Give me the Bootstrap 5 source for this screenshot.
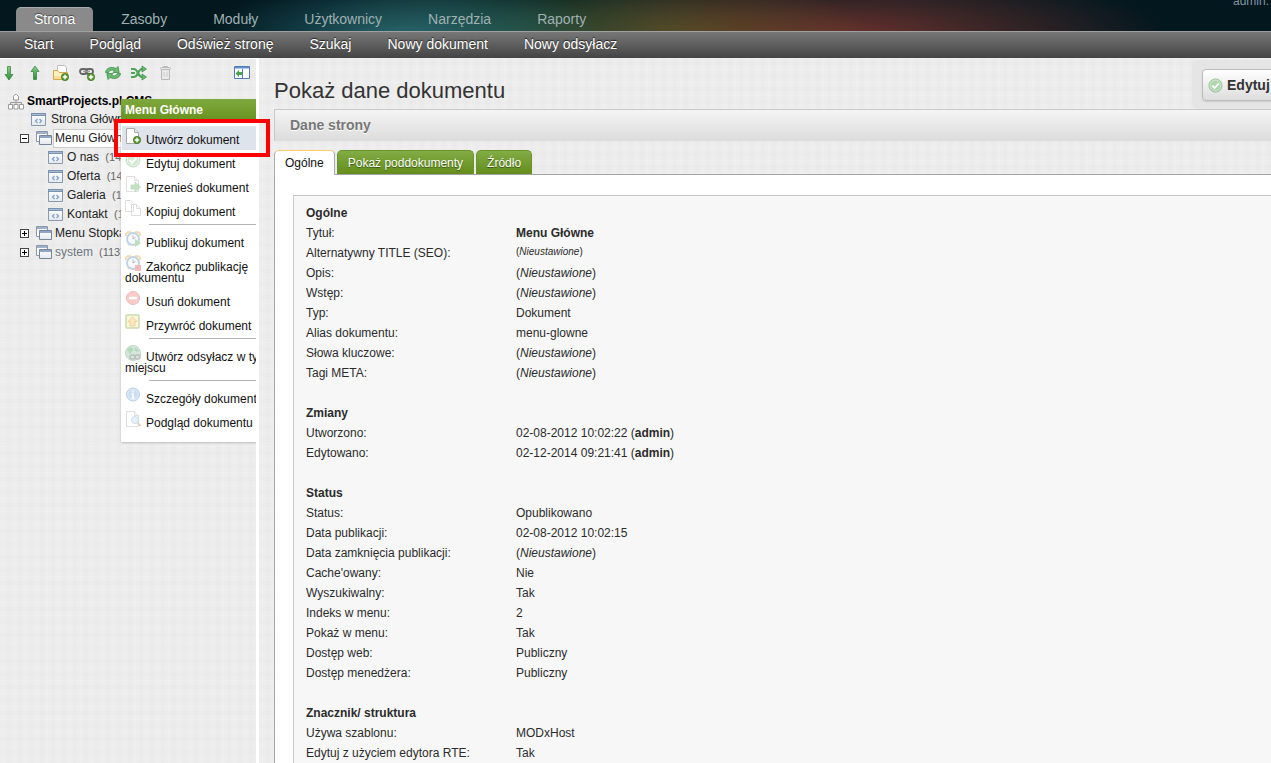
<!DOCTYPE html>
<html lang="pl">
<head>
<meta charset="utf-8">
<meta name="viewport" content="width=device-width, initial-scale=1">
<title>Pokaż dane dokumentu</title>
<link href="https://cdn.jsdelivr.net/npm/bootstrap@5.3.0/dist/css/bootstrap.min.css" rel="stylesheet">
<script src="https://cdn.jsdelivr.net/npm/bootstrap@5.3.0/dist/js/bootstrap.bundle.min.js"></script>
<style>
body{font:12px/20px "Liberation Sans",Arial,sans-serif;color:#2b2b2b}
a{color:inherit;text-decoration:none}
svg{flex:none}
.linen{background-color:#ededed;background-image:
 repeating-linear-gradient(90deg,transparent 0 3px,rgba(255,255,255,.14) 3px 4px,transparent 4px 7px,rgba(0,0,0,.006) 7px 11px),
 repeating-linear-gradient(0deg,transparent 0 4px,rgba(255,255,255,.12) 4px 5px,transparent 5px 9px,rgba(0,0,0,.006) 9px 13px)}
.topbar{height:31px;font-size:14px;background:
 radial-gradient(ellipse 200px 60px at 405px 36px,rgba(45,115,125,.8),transparent),
 radial-gradient(ellipse 220px 70px at 520px 36px,rgba(45,90,55,.6),transparent),
 radial-gradient(ellipse 200px 60px at 670px 36px,rgba(120,95,35,.65),transparent),
 radial-gradient(ellipse 320px 70px at 850px 36px,rgba(140,58,50,.75),transparent),
 #02171e}
.topbar .tab-link{padding:0 18px;height:24px;line-height:25px;color:#9fb1b1;border-radius:5px 5px 0 0}
.topbar .tab-link.active{background:#8a8a8a;color:#fff;border-top:1px solid #aaa;line-height:23px;text-shadow:0 -1px 1px #444}
.user-info{top:-6px;right:2px;font-size:12px;line-height:15px;color:#8197a1}
.subnav{height:27px;padding-left:6px;font-size:14px;line-height:25px;color:#fff;border-top:1px solid #a0a0a0;background:linear-gradient(#777,#444);text-shadow:0 -1px 1px #222}
.subnav a{padding:0 18px}
.side{width:259px;border-right:3px solid #fff;border-top:1px solid #fff;flex:none}
.tools{padding:6px 6px 0 1px;gap:10px}
.icon-btn{border:0;background:none;padding:0;display:flex}
.tree{margin-top:10px;line-height:19px;color:#222}
.tree li{height:19px;white-space:nowrap;display:flex;align-items:center}
.tree .root-row{padding:2px 0 0 8px;gap:3px;font-weight:700;color:#000}
.tree .page-row{padding-left:31px;gap:5px}
.tree .folder-row{padding-left:20px;gap:7px}
.tree .folder-row a{display:flex;align-items:center;gap:1px}
.tree .child-row{padding-left:48px;gap:4px}
.tree .node-text{padding:0 2px}
.tree .chosen{background:#fff;border:1px solid #ccc;padding:0 50px 0 1px;line-height:17px}
.tree .num{font-size:11px;color:#666;margin-left:3px}
.toggle{width:9px;height:9px;border:1px solid #444;background:#fff;padding:0;display:flex}
.ctx{left:121px;top:40px;width:150px;background:#fff;color:#111;box-shadow:0 1px 2px #bbb}
.ctx h2{margin:0;padding:0 4px;height:21px;font-size:12px;line-height:22px;font-weight:700;color:#fff;background:linear-gradient(#7fa93f,#69931f)}
.ctx ul{padding:6px 0 9px 1px}
.ctx li a{display:block;padding:2px 0 4px 3px;line-height:11px}
.ctx li svg{vertical-align:0;margin-right:5px;opacity:.38}
.ctx li.hot a{background:#dde4ec}
.ctx li.hot svg{opacity:1}
.ctx hr{margin:2px 0 4px 27px;border:0;height:1px;background:#999;opacity:.75}
.marker{left:114px;top:119px;width:156px;height:38px;border:4px solid #f00;pointer-events:none}
.page-area{padding:2px 0 0 15px}
.page-area h1{margin:0;font-size:22px;line-height:26px;padding-top:18px;color:#333}
.actions{height:49px;width:79px;padding:9px 0 0 10px;background:#e5e5e5;border-radius:6px 0 0 6px}
.edit-btn{width:100px;height:32px;gap:4px;padding:0 5px;font-size:14px;font-weight:700;color:#333;border:1px solid #bbb;border-radius:4px;background:linear-gradient(#fff,#ddd);box-shadow:0 1px 2px #ccc}
.section-head{height:32px;margin:0 0 9px;padding-left:15px;border:1px solid #c8c8c8;border-width:1px 0 0 1px;font-size:14px;line-height:31px;font-weight:700;color:#777;background:linear-gradient(#f4f4f4,#dcdcdc);text-shadow:0 1px 0 #fff}
.tabs{gap:2px;margin-bottom:-1px;position:relative}
.tabs button{height:24px;padding:0 10px;line-height:25px;color:#fff;border:1px solid #69942a;border-bottom:0;border-radius:5px 5px 0 0;background:linear-gradient(#82ac45,#648d1c);text-shadow:0 1px 1px #34510b}
.tabs button.active{height:25px;line-height:24px;color:#111;background:#fff;border-color:#fc6 #aaa #aaa;text-shadow:none}
.panel-box{background:#fff;border:1px solid #a3a3a3;border-width:1px 0 0 1px;padding:20px 0 0 18px}
.info-box{background:#f7f7f7;border:1px solid #c8c8c8;border-width:1px 0 0 1px;padding:7px 0 40px 12px}
.info-box table{width:100%}
.info-box td,.info-box th{height:20px;padding:0;line-height:20px;vertical-align:top}
.info-box td:first-child{width:210px}
.tiny{font-size:10px;line-height:18px;display:block}
</style>
</head>
<body class="vh-100 overflow-hidden d-flex flex-column position-relative">
<svg width="0" height="0" class="position-absolute" aria-hidden="true">
 <defs>
 <linearGradient id="gg" x2="0" y2="1"><stop stop-color="#8fd08f"/><stop offset="1" stop-color="#2a8a35"/></linearGradient>
 <linearGradient id="bl" x2="0" y2="1"><stop stop-color="#fff"/><stop offset="1" stop-color="#e4e9ef"/></linearGradient>
 </defs>
 <symbol id="plus" viewBox="0 0 8 8"><circle cx="4" cy="4" r="3.7" fill="#5b9a35" stroke="#3a6f1e" stroke-width=".6"/><path d="M4 1.8v4.4M1.8 4h4.4" stroke="#fff" stroke-width="1.4"/></symbol>
 <symbol id="sheet" viewBox="0 0 16 16"><path d="M1.5.5h8l4 4v11h-12z" fill="#fff" stroke="#aaa"/><path d="M9.500.5v4h4" fill="#eee" stroke="#aaa"/></symbol>
 <symbol id="page" viewBox="0 0 15 13"><path d="M.5.5h14v12H.5z" fill="url(#bl)" stroke="#8a99ac"/><path d="M0 0h15v3H0z" fill="#7b93b3"/><path d="M1 1h13v1H1z" fill="#a5b8d0"/><path d="M6.500 6 4.500 8l2 2M8.500 6l2 2-2 2" fill="none" stroke="#7f9fc9" stroke-width="1.200"/></symbol>
 <symbol id="folder" viewBox="0 0 16 15"><path d="M.5.500h11v10H.5z" fill="#fff" stroke="#8a97a8"/><path d="M1 1h10v2H1z" fill="#9fb2ca"/><path d="M3.500 4.500h12v9h-12z" fill="url(#bl)" stroke="#75869b"/><path d="M4 5h11v2H4z" fill="#8ea6c4"/></symbol>
 <symbol id="check" viewBox="0 0 16 16"><circle cx="8" cy="8" r="7" fill="#8cc88a" stroke="#68aa66"/><circle cx="8" cy="8" r="5.800" fill="none" stroke="#c5e8c3"/><path d="m4.500 8 2.500 2.700 4.600-5" fill="none" stroke="#fff" stroke-width="2"/></symbol>
 <symbol id="clock" viewBox="0 0 16 16"><path d="M1 5a3 3 0 0 1 5-3M10 2a3 3 0 0 1 5 3M3 14l2-2M13 14l-2-2" stroke="#e6a23c" stroke-width="2" fill="none"/><circle cx="8" cy="8" r="6" fill="#e9f3fc" stroke="#5d8cc2" stroke-width="2"/><path d="M8 4.500V8l2.500-1.500" stroke="#345" fill="none"/></symbol>
</svg>

<header>
 <div class="topbar position-relative d-flex align-items-end">
  <nav class="d-flex ms-3" style="gap:10px" aria-label="Główne menu">
   <a class="tab-link active" href="#">Strona</a><a class="tab-link" href="#">Zasoby</a><a class="tab-link" href="#">Moduły</a><a class="tab-link" href="#">Użytkownicy</a><a class="tab-link" href="#">Narzędzia</a><a class="tab-link" href="#">Raporty</a>
  </nav>
  <span class="user-info position-absolute">admin.</span>
 </div>
 <nav class="subnav d-flex" aria-label="Podmenu">
  <a href="#">Start</a><a href="#">Podgląd</a><a href="#">Odśwież stronę</a><a href="#">Szukaj</a><a href="#">Nowy dokument</a><a href="#">Nowy odsyłacz</a>
 </nav>
</header>

<div class="d-flex flex-grow-1 overflow-hidden">
 <aside class="side linen position-relative overflow-hidden">
  <div class="tools d-flex">
   <button class="icon-btn" aria-label="Rozwiń"><svg width="16" height="16"><path d="M6.500 1.500h3v8h2.500L8 15 4 9.500h2.500z" fill="url(#gg)" stroke="#3b8d43" stroke-width=".8"/></svg></button>
   <button class="icon-btn" aria-label="Zwiń"><svg width="16" height="16"><path d="M6.500 14.500h3v-8H12L8 1 4 6.500h2.500z" fill="url(#gg)" stroke="#3b8d43" stroke-width=".8"/></svg></button>
   <button class="icon-btn" aria-label="Nowy dokument"><svg width="16" height="16"><path d="M4.500.5h7l2 2v7h-9z" fill="#fff" stroke="#bbb"/><path d="M.5 14.500v-9h4l1.500 2h8.500v7z" fill="#fdeebf" stroke="#d6a84a"/><path d="M1 11h13v3H1z" fill="#fadc93"/><use href="#plus" x="8" y="8" width="8" height="8"/></svg></button>
   <button class="icon-btn" aria-label="Nowy odsyłacz"><svg width="16" height="16"><g fill="none" stroke="#666" stroke-width="1.800"><rect x="1" y="4" width="7" height="5" rx="2.500"/><rect x="7" y="4" width="7" height="5" rx="2.500"/></g><path d="M4 6.500h7" stroke="#999" stroke-width="1.500"/><use href="#plus" x="8" y="8" width="8" height="8"/></svg></button>
   <button class="icon-btn" aria-label="Odśwież"><svg width="16" height="16" fill="#6abb72" stroke="#2f8540" stroke-width=".7"><path d="M.5 7.500C1 3 6.500 1 11 3.500l2-2 1.200 6H8l1.500-1.800C7 4.500 4.500 5 3.500 7.500z"/><path d="M15.500 8.500C15 13 9.500 15 5 12.500l-2 2-1.200-6H8l-1.500 1.800c2.500 1.200 5 .7 6-1.800z"/></svg></button>
   <button class="icon-btn" aria-label="Sortuj"><svg width="16" height="16"><path d="M0 4h3c4 0 4 8 8 8h1M0 12h3c4 0 4-8 8-8h1M0 8h4" fill="none" stroke="#4ca659" stroke-width="2.200"/><path d="m11 1 4.500 3L11 7zM11 9l4.500 3-4.500 3z" fill="#6bbb72" stroke="#2f8540" stroke-width=".7"/></svg></button>
   <button class="icon-btn" aria-label="Opróżnij kosz" disabled><svg width="16" height="16" fill="#e9e9e9" stroke="#b9b9b9"><path d="M4.500 4.500h8v10h-8z"/><rect x="3.500" y="2.500" width="10" height="2" rx="1"/><path d="M6.500 2.500v-1h4v1" fill="none"/><path d="M7 7v5M10 7v5" stroke="#cfcfcf" fill="none"/></svg></button>
   <button class="icon-btn ms-auto" aria-label="Ukryj drzewo"><svg width="16" height="16"><path d="M.5 1.500h15v12H.5z" fill="#fff" stroke="#4c7eb5"/><path d="M1 2h14v1.500H1z" fill="#5b93cf"/><path d="M8.500 4v9" stroke="#4c7eb5"/><path d="M1.500 8.500 5 5v2h3v3H5v2z" fill="#4ba44b"/></svg></button>
  </div>
  <ul class="tree list-unstyled mb-0">
   <li class="root-row"><svg width="16" height="16" fill="#fff" stroke="#999"><path d="M5.500 6V2.500L7 .500h1.500l2 2V6zM.5 15v-4.500h4V15zM6 15v-4.500h4V15zM11.500 15v-4.500h4V15z"/><path d="M8 6v4.500M2.500 10V8.500h11V10" fill="none"/></svg><a href="#">SmartProjects.pl CMS</a></li>
   <li class="page-row"><svg width="15" height="13"><use href="#page"/></svg><a href="#">Strona Główna</a></li>
   <li class="folder-row"><button class="toggle" aria-label="Zwiń"><svg width="7" height="7"><path d="M1 3.500h5" stroke="#000"/></svg></button><a href="#"><svg width="16" height="15"><use href="#folder"/></svg><span class="chosen">Menu Główne</span></a></li>
   <li class="child-row"><svg width="15" height="13"><use href="#page"/></svg><a href="#">O nas <span class="num">(142)</span></a></li>
   <li class="child-row"><svg width="15" height="13"><use href="#page"/></svg><a href="#">Oferta <span class="num">(143)</span></a></li>
   <li class="child-row"><svg width="15" height="13"><use href="#page"/></svg><a href="#">Galeria <span class="num">(144)</span></a></li>
   <li class="child-row"><svg width="15" height="13"><use href="#page"/></svg><a href="#">Kontakt <span class="num">(145)</span></a></li>
   <li class="folder-row"><button class="toggle" aria-label="Rozwiń"><svg width="7" height="7"><path d="M1 3.500h5M3.500 1v5" stroke="#000"/></svg></button><a href="#"><svg width="16" height="15"><use href="#folder"/></svg><span class="node-text">Menu Stopka</span></a></li>
   <li class="folder-row"><button class="toggle" aria-label="Rozwiń"><svg width="7" height="7"><path d="M1 3.500h5M3.500 1v5" stroke="#000"/></svg></button><a href="#"><svg width="16" height="15"><use href="#folder"/></svg><span class="node-text text-secondary">system</span><span class="num">(113)</span></a></li>
  </ul>

  <div class="ctx position-absolute">
   <h2>Menu Główne</h2>
   <ul class="list-unstyled mb-0">
    <li class="hot"><a href="#"><svg width="16" height="16"><use href="#sheet"/><use href="#plus" x="8" y="8" width="8" height="8"/></svg>Utwórz dokument</a></li>
    <li><a href="#"><svg width="16" height="16"><use href="#check"/></svg>Edytuj dokument</a></li>
    <li><a href="#"><svg width="16" height="16"><use href="#sheet"/><path d="M6 9h4V6l5.500 5L10 15.500V13H6z" fill="#62b562" stroke="#3b8d43" stroke-width=".7"/></svg>Przenieś dokument</a></li>
    <li><a href="#"><svg width="16" height="16" fill="#fff" stroke="#aaa"><path d="M.5.500h5l3 3v8h-8zM6.500 4.500h5l4 4v7h-9z"/><path d="M11.500 4.500v4h4" fill="none"/></svg>Kopiuj dokument</a></li>
    <li><hr></li>
    <li><a href="#"><svg width="16" height="16"><use href="#clock"/><path d="m10 8 6 4-6 4z" fill="#4fae4f"/></svg>Publikuj dokument</a></li>
    <li><a href="#"><svg width="16" height="16"><use href="#clock"/><path d="M10 10h6v6h-6z" fill="#df4a4a"/></svg>Zakończ publikację dokumentu</a></li>
    <li><a href="#"><svg width="16" height="16"><circle cx="8" cy="8" r="6.500" fill="#ee7a74" stroke="#d04a45"/><path d="M4 8h8" stroke="#fff" stroke-width="2.500"/></svg>Usuń dokument</a></li>
    <li><a href="#"><svg width="16" height="16"><rect x="1" y="1" width="13" height="13" rx="1" fill="#f7e5a0" stroke="#77a52d" stroke-width="1.500"/><path d="m7.500 3 4.500 4.500h-2V12H5V7.500H3z" fill="#fdc44a" stroke="#d28b1c"/></svg>Przywróć dokument</a></li>
    <li><hr></li>
    <li><a href="#"><svg width="16" height="16"><circle cx="8" cy="8" r="7.500" fill="#8fc5a0" stroke="#569a6a"/><path d="M2 5c3-4 5-3 6-1s-2 3-3 5zM9 3c3 0 5 2 5 4l-4-1z" fill="#3d9a4c"/><g fill="none" stroke="#555" stroke-width="1.500"><rect x="5" y="10" width="5" height="4" rx="2"/><rect x="10" y="10" width="5" height="4" rx="2"/></g></svg>Utwórz odsyłacz w tym miejscu</a></li>
    <li><hr></li>
    <li><a href="#"><svg width="16" height="16"><circle cx="8" cy="7.500" r="6.500" fill="#78a9dd" stroke="#4b7fba"/><circle cx="8" cy="7.500" r="5.300" fill="none" stroke="#b5d3f2"/><path d="M8 3.500v2M8 6.500v5M6.500 11h3M6.500 7H8" stroke="#fff" stroke-width="1.500"/></svg>Szczegóły dokumentu</a></li>
    <li><a href="#"><svg width="16" height="16"><use href="#sheet"/><circle cx="10" cy="9" r="3.500" fill="#b9dcf7" stroke="#7ea6c8"/><path d="m12.500 12 3 3" stroke="#c88f4e" stroke-width="2"/></svg>Podgląd dokumentu</a></li>
   </ul>
  </div>
 </aside>

 <main class="page-area linen flex-grow-1 overflow-hidden">
  <div class="d-flex justify-content-between">
   <h1>Pokaż dane dokumentu</h1>
   <div class="actions overflow-hidden"><button class="edit-btn d-flex align-items-center"><svg width="15" height="15" opacity=".65"><use href="#check"/></svg>Edytuj</button></div>
  </div>
  <h2 class="section-head">Dane strony</h2>
  <div class="tabs d-flex align-items-start" role="tablist">
   <button class="active" role="tab" aria-selected="true">Ogólne</button><button role="tab">Pokaż poddokumenty</button><button role="tab">Źródło</button>
  </div>
  <div class="panel-box">
   <div class="info-box">
    <table>
     <tbody>
     <tr><th colspan="2">Ogólne</th></tr>
     <tr><td>Tytuł:</td><td><b>Menu Główne</b></td></tr>
     <tr><td>Alternatywny TITLE (SEO):</td><td><span class="tiny">(<i>Nieustawione</i>)</span></td></tr>
     <tr><td>Opis:</td><td>(<i>Nieustawione</i>)</td></tr>
     <tr><td>Wstęp:</td><td>(<i>Nieustawione</i>)</td></tr>
     <tr><td>Typ:</td><td>Dokument</td></tr>
     <tr><td>Alias dokumentu:</td><td>menu-glowne</td></tr>
     <tr><td>Słowa kluczowe:</td><td>(<i>Nieustawione</i>)</td></tr>
     <tr><td>Tagi META:</td><td>(<i>Nieustawione</i>)</td></tr>
     <tr><td colspan="2"></td></tr>
     <tr><th colspan="2">Zmiany</th></tr>
     <tr><td>Utworzono:</td><td>02-08-2012 10:02:22 (<b>admin</b>)</td></tr>
     <tr><td>Edytowano:</td><td>02-12-2014 09:21:41 (<b>admin</b>)</td></tr>
     <tr><td colspan="2"></td></tr>
     <tr><th colspan="2">Status</th></tr>
     <tr><td>Status:</td><td>Opublikowano</td></tr>
     <tr><td>Data publikacji:</td><td>02-08-2012 10:02:15</td></tr>
     <tr><td>Data zamknięcia publikacji:</td><td>(<i>Nieustawione</i>)</td></tr>
     <tr><td>Cache'owany:</td><td>Nie</td></tr>
     <tr><td>Wyszukiwalny:</td><td>Tak</td></tr>
     <tr><td>Indeks w menu:</td><td>2</td></tr>
     <tr><td>Pokaż w menu:</td><td>Tak</td></tr>
     <tr><td>Dostęp web:</td><td>Publiczny</td></tr>
     <tr><td>Dostęp menedżera:</td><td>Publiczny</td></tr>
     <tr><td colspan="2"></td></tr>
     <tr><th colspan="2">Znacznik/ struktura</th></tr>
     <tr><td>Używa szablonu:</td><td>MODxHost</td></tr>
     <tr><td>Edytuj z użyciem edytora RTE:</td><td>Tak</td></tr>
     </tbody>
    </table>
   </div>
  </div>
 </main>
</div>
<div class="marker position-absolute"></div>
</body>
</html>
